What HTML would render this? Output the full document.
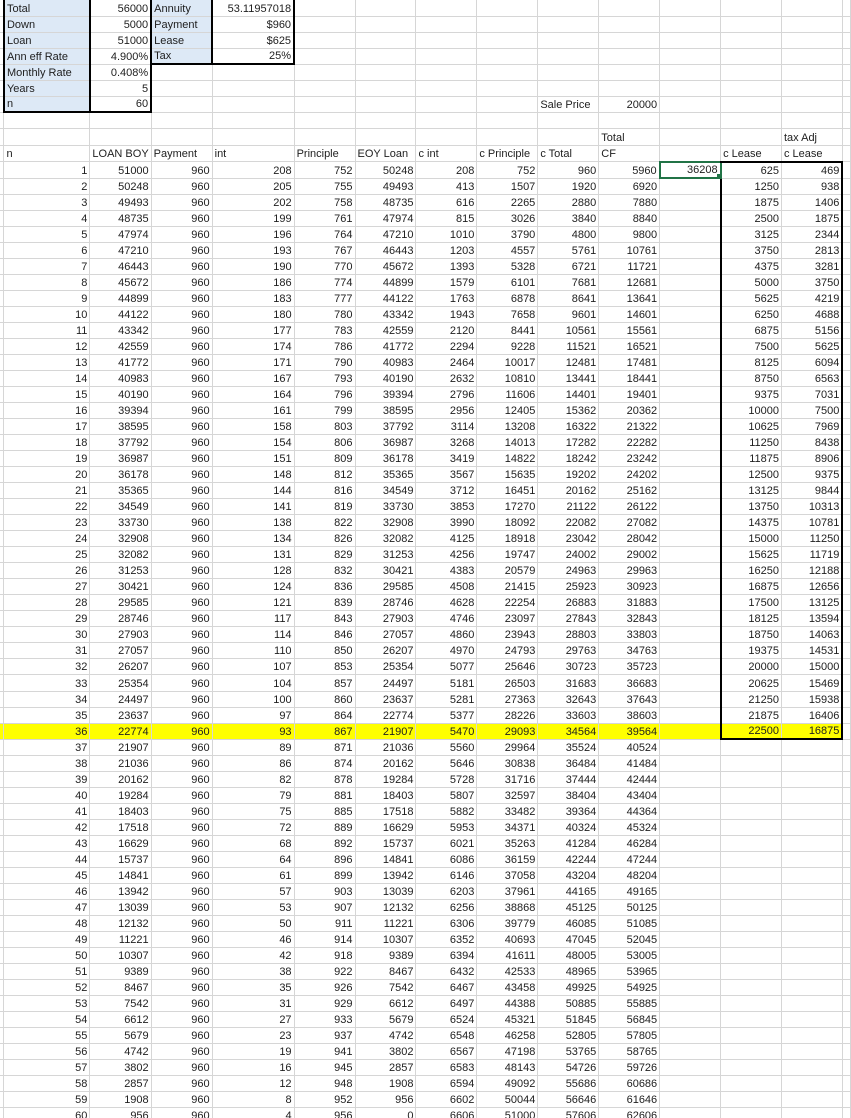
<!DOCTYPE html>
<html><head><meta charset="utf-8"><style>
html,body{margin:0;padding:0;background:#fff;width:851px;height:1118px;overflow:hidden}
table{border-collapse:collapse;table-layout:fixed;font-family:"Liberation Sans",sans-serif;font-size:11px;color:#1e1e1e}
td{border:1px solid #d6d6d6;padding:0 2px 0 2px;text-align:right;vertical-align:bottom;white-space:nowrap;overflow:hidden;line-height:13px;box-sizing:border-box}
td.l{text-align:left}
td.b{background:#dde9f6}
tr.t td{height:16px}
tr.t:first-child td{border-top:none}
tr.m td{height:16.67px}
tr.d td{height:16.04px}
tr.y td.yy{background:#ffff00}
td.z{border-left:none;border-right:1px solid #d6d6d6;padding:0}
</style></head><body>
<table>
<colgroup><col style="width:4px"><col style="width:86px"><col style="width:61px"><col style="width:61px"><col style="width:82px"><col style="width:61px"><col style="width:61px"><col style="width:61px"><col style="width:61px"><col style="width:61px"><col style="width:61px"><col style="width:61px"><col style="width:61px"><col style="width:61px"><col style="width:8px"></colgroup>
<tr class="t"><td class="z"></td><td class="l b" style="border-left:2px solid #000;border-right:2px solid #000">Total</td><td style="border-right:2px solid #000">56000</td><td class="l b">Annuity</td><td style="border-left:2px solid #000;border-right:2px solid #000">53.11957018</td><td></td><td></td><td></td><td></td><td></td><td></td><td></td><td></td><td></td><td></td></tr>
<tr class="t"><td class="z"></td><td class="l b" style="border-left:2px solid #000;border-right:2px solid #000">Down</td><td style="border-right:2px solid #000">5000</td><td class="l b">Payment</td><td style="border-left:2px solid #000;border-right:2px solid #000">$960</td><td></td><td></td><td></td><td></td><td></td><td></td><td></td><td></td><td></td><td></td></tr>
<tr class="t"><td class="z"></td><td class="l b" style="border-left:2px solid #000;border-right:2px solid #000">Loan</td><td style="border-right:2px solid #000">51000</td><td class="l b">Lease</td><td style="border-left:2px solid #000;border-right:2px solid #000">$625</td><td></td><td></td><td></td><td></td><td></td><td></td><td></td><td></td><td></td><td></td></tr>
<tr class="t"><td class="z"></td><td class="l b" style="border-left:2px solid #000;border-right:2px solid #000">Ann eff Rate</td><td style="border-right:2px solid #000">4.900%</td><td class="l b" style="border-bottom:2px solid #000">Tax</td><td style="border-left:2px solid #000;border-right:2px solid #000;border-bottom:2px solid #000">25%</td><td></td><td></td><td></td><td></td><td></td><td></td><td></td><td></td><td></td><td></td></tr>
<tr class="t"><td class="z"></td><td class="l b" style="border-left:2px solid #000;border-right:2px solid #000">Monthly Rate</td><td style="border-right:2px solid #000">0.408%</td><td></td><td></td><td></td><td></td><td></td><td></td><td></td><td></td><td></td><td></td><td></td><td></td></tr>
<tr class="t"><td class="z"></td><td class="l b" style="border-left:2px solid #000;border-right:2px solid #000">Years</td><td style="border-right:2px solid #000">5</td><td></td><td></td><td></td><td></td><td></td><td></td><td></td><td></td><td></td><td></td><td></td><td></td></tr>
<tr class="t"><td class="z"></td><td class="l b" style="border-left:2px solid #000;border-right:2px solid #000;border-bottom:2px solid #000">n</td><td style="border-right:2px solid #000;border-bottom:2px solid #000">60</td><td></td><td></td><td></td><td></td><td></td><td></td><td class="l">Sale Price</td><td>20000</td><td></td><td></td><td></td><td></td></tr>
<tr class="m"><td class="z"></td><td></td><td></td><td></td><td></td><td></td><td></td><td></td><td></td><td></td><td></td><td></td><td></td><td></td><td></td></tr>
<tr class="m"><td class="z"></td><td></td><td></td><td></td><td></td><td></td><td></td><td></td><td></td><td></td><td class="l">Total</td><td></td><td></td><td class="l">tax Adj</td><td></td></tr>
<tr class="m"><td class="z"></td><td class="l">n</td><td class="l">LOAN BOY</td><td class="l">Payment</td><td class="l">int</td><td class="l">Principle</td><td class="l">EOY Loan</td><td class="l">c int</td><td class="l">c Principle</td><td class="l">c Total</td><td class="l">CF</td><td></td><td class="l" style="border-bottom:2px solid #000">c Lease</td><td class="l" style="border-bottom:2px solid #000">c Lease</td><td></td></tr>
<tr class="d"><td class="z"></td><td>1</td><td>51000</td><td>960</td><td>208</td><td>752</td><td>50248</td><td>208</td><td>752</td><td>960</td><td>5960</td><td style="border:2px solid #217346;position:relative">36208<span style="position:absolute;right:-4px;bottom:-4px;width:6px;height:6px;background:#217346;border:1px solid #fff"></span></td><td style="border-left:2px solid #000">625</td><td style="border-right:2px solid #000">469</td><td></td></tr>
<tr class="d"><td class="z"></td><td>2</td><td>50248</td><td>960</td><td>205</td><td>755</td><td>49493</td><td>413</td><td>1507</td><td>1920</td><td>6920</td><td></td><td style="border-left:2px solid #000">1250</td><td style="border-right:2px solid #000">938</td><td></td></tr>
<tr class="d"><td class="z"></td><td>3</td><td>49493</td><td>960</td><td>202</td><td>758</td><td>48735</td><td>616</td><td>2265</td><td>2880</td><td>7880</td><td></td><td style="border-left:2px solid #000">1875</td><td style="border-right:2px solid #000">1406</td><td></td></tr>
<tr class="d"><td class="z"></td><td>4</td><td>48735</td><td>960</td><td>199</td><td>761</td><td>47974</td><td>815</td><td>3026</td><td>3840</td><td>8840</td><td></td><td style="border-left:2px solid #000">2500</td><td style="border-right:2px solid #000">1875</td><td></td></tr>
<tr class="d"><td class="z"></td><td>5</td><td>47974</td><td>960</td><td>196</td><td>764</td><td>47210</td><td>1010</td><td>3790</td><td>4800</td><td>9800</td><td></td><td style="border-left:2px solid #000">3125</td><td style="border-right:2px solid #000">2344</td><td></td></tr>
<tr class="d"><td class="z"></td><td>6</td><td>47210</td><td>960</td><td>193</td><td>767</td><td>46443</td><td>1203</td><td>4557</td><td>5761</td><td>10761</td><td></td><td style="border-left:2px solid #000">3750</td><td style="border-right:2px solid #000">2813</td><td></td></tr>
<tr class="d"><td class="z"></td><td>7</td><td>46443</td><td>960</td><td>190</td><td>770</td><td>45672</td><td>1393</td><td>5328</td><td>6721</td><td>11721</td><td></td><td style="border-left:2px solid #000">4375</td><td style="border-right:2px solid #000">3281</td><td></td></tr>
<tr class="d"><td class="z"></td><td>8</td><td>45672</td><td>960</td><td>186</td><td>774</td><td>44899</td><td>1579</td><td>6101</td><td>7681</td><td>12681</td><td></td><td style="border-left:2px solid #000">5000</td><td style="border-right:2px solid #000">3750</td><td></td></tr>
<tr class="d"><td class="z"></td><td>9</td><td>44899</td><td>960</td><td>183</td><td>777</td><td>44122</td><td>1763</td><td>6878</td><td>8641</td><td>13641</td><td></td><td style="border-left:2px solid #000">5625</td><td style="border-right:2px solid #000">4219</td><td></td></tr>
<tr class="d"><td class="z"></td><td>10</td><td>44122</td><td>960</td><td>180</td><td>780</td><td>43342</td><td>1943</td><td>7658</td><td>9601</td><td>14601</td><td></td><td style="border-left:2px solid #000">6250</td><td style="border-right:2px solid #000">4688</td><td></td></tr>
<tr class="d"><td class="z"></td><td>11</td><td>43342</td><td>960</td><td>177</td><td>783</td><td>42559</td><td>2120</td><td>8441</td><td>10561</td><td>15561</td><td></td><td style="border-left:2px solid #000">6875</td><td style="border-right:2px solid #000">5156</td><td></td></tr>
<tr class="d"><td class="z"></td><td>12</td><td>42559</td><td>960</td><td>174</td><td>786</td><td>41772</td><td>2294</td><td>9228</td><td>11521</td><td>16521</td><td></td><td style="border-left:2px solid #000">7500</td><td style="border-right:2px solid #000">5625</td><td></td></tr>
<tr class="d"><td class="z"></td><td>13</td><td>41772</td><td>960</td><td>171</td><td>790</td><td>40983</td><td>2464</td><td>10017</td><td>12481</td><td>17481</td><td></td><td style="border-left:2px solid #000">8125</td><td style="border-right:2px solid #000">6094</td><td></td></tr>
<tr class="d"><td class="z"></td><td>14</td><td>40983</td><td>960</td><td>167</td><td>793</td><td>40190</td><td>2632</td><td>10810</td><td>13441</td><td>18441</td><td></td><td style="border-left:2px solid #000">8750</td><td style="border-right:2px solid #000">6563</td><td></td></tr>
<tr class="d"><td class="z"></td><td>15</td><td>40190</td><td>960</td><td>164</td><td>796</td><td>39394</td><td>2796</td><td>11606</td><td>14401</td><td>19401</td><td></td><td style="border-left:2px solid #000">9375</td><td style="border-right:2px solid #000">7031</td><td></td></tr>
<tr class="d"><td class="z"></td><td>16</td><td>39394</td><td>960</td><td>161</td><td>799</td><td>38595</td><td>2956</td><td>12405</td><td>15362</td><td>20362</td><td></td><td style="border-left:2px solid #000">10000</td><td style="border-right:2px solid #000">7500</td><td></td></tr>
<tr class="d"><td class="z"></td><td>17</td><td>38595</td><td>960</td><td>158</td><td>803</td><td>37792</td><td>3114</td><td>13208</td><td>16322</td><td>21322</td><td></td><td style="border-left:2px solid #000">10625</td><td style="border-right:2px solid #000">7969</td><td></td></tr>
<tr class="d"><td class="z"></td><td>18</td><td>37792</td><td>960</td><td>154</td><td>806</td><td>36987</td><td>3268</td><td>14013</td><td>17282</td><td>22282</td><td></td><td style="border-left:2px solid #000">11250</td><td style="border-right:2px solid #000">8438</td><td></td></tr>
<tr class="d"><td class="z"></td><td>19</td><td>36987</td><td>960</td><td>151</td><td>809</td><td>36178</td><td>3419</td><td>14822</td><td>18242</td><td>23242</td><td></td><td style="border-left:2px solid #000">11875</td><td style="border-right:2px solid #000">8906</td><td></td></tr>
<tr class="d"><td class="z"></td><td>20</td><td>36178</td><td>960</td><td>148</td><td>812</td><td>35365</td><td>3567</td><td>15635</td><td>19202</td><td>24202</td><td></td><td style="border-left:2px solid #000">12500</td><td style="border-right:2px solid #000">9375</td><td></td></tr>
<tr class="d"><td class="z"></td><td>21</td><td>35365</td><td>960</td><td>144</td><td>816</td><td>34549</td><td>3712</td><td>16451</td><td>20162</td><td>25162</td><td></td><td style="border-left:2px solid #000">13125</td><td style="border-right:2px solid #000">9844</td><td></td></tr>
<tr class="d"><td class="z"></td><td>22</td><td>34549</td><td>960</td><td>141</td><td>819</td><td>33730</td><td>3853</td><td>17270</td><td>21122</td><td>26122</td><td></td><td style="border-left:2px solid #000">13750</td><td style="border-right:2px solid #000">10313</td><td></td></tr>
<tr class="d"><td class="z"></td><td>23</td><td>33730</td><td>960</td><td>138</td><td>822</td><td>32908</td><td>3990</td><td>18092</td><td>22082</td><td>27082</td><td></td><td style="border-left:2px solid #000">14375</td><td style="border-right:2px solid #000">10781</td><td></td></tr>
<tr class="d"><td class="z"></td><td>24</td><td>32908</td><td>960</td><td>134</td><td>826</td><td>32082</td><td>4125</td><td>18918</td><td>23042</td><td>28042</td><td></td><td style="border-left:2px solid #000">15000</td><td style="border-right:2px solid #000">11250</td><td></td></tr>
<tr class="d"><td class="z"></td><td>25</td><td>32082</td><td>960</td><td>131</td><td>829</td><td>31253</td><td>4256</td><td>19747</td><td>24002</td><td>29002</td><td></td><td style="border-left:2px solid #000">15625</td><td style="border-right:2px solid #000">11719</td><td></td></tr>
<tr class="d"><td class="z"></td><td>26</td><td>31253</td><td>960</td><td>128</td><td>832</td><td>30421</td><td>4383</td><td>20579</td><td>24963</td><td>29963</td><td></td><td style="border-left:2px solid #000">16250</td><td style="border-right:2px solid #000">12188</td><td></td></tr>
<tr class="d"><td class="z"></td><td>27</td><td>30421</td><td>960</td><td>124</td><td>836</td><td>29585</td><td>4508</td><td>21415</td><td>25923</td><td>30923</td><td></td><td style="border-left:2px solid #000">16875</td><td style="border-right:2px solid #000">12656</td><td></td></tr>
<tr class="d"><td class="z"></td><td>28</td><td>29585</td><td>960</td><td>121</td><td>839</td><td>28746</td><td>4628</td><td>22254</td><td>26883</td><td>31883</td><td></td><td style="border-left:2px solid #000">17500</td><td style="border-right:2px solid #000">13125</td><td></td></tr>
<tr class="d"><td class="z"></td><td>29</td><td>28746</td><td>960</td><td>117</td><td>843</td><td>27903</td><td>4746</td><td>23097</td><td>27843</td><td>32843</td><td></td><td style="border-left:2px solid #000">18125</td><td style="border-right:2px solid #000">13594</td><td></td></tr>
<tr class="d"><td class="z"></td><td>30</td><td>27903</td><td>960</td><td>114</td><td>846</td><td>27057</td><td>4860</td><td>23943</td><td>28803</td><td>33803</td><td></td><td style="border-left:2px solid #000">18750</td><td style="border-right:2px solid #000">14063</td><td></td></tr>
<tr class="d"><td class="z"></td><td>31</td><td>27057</td><td>960</td><td>110</td><td>850</td><td>26207</td><td>4970</td><td>24793</td><td>29763</td><td>34763</td><td></td><td style="border-left:2px solid #000">19375</td><td style="border-right:2px solid #000">14531</td><td></td></tr>
<tr class="d"><td class="z"></td><td>32</td><td>26207</td><td>960</td><td>107</td><td>853</td><td>25354</td><td>5077</td><td>25646</td><td>30723</td><td>35723</td><td></td><td style="border-left:2px solid #000">20000</td><td style="border-right:2px solid #000">15000</td><td></td></tr>
<tr class="d"><td class="z"></td><td>33</td><td>25354</td><td>960</td><td>104</td><td>857</td><td>24497</td><td>5181</td><td>26503</td><td>31683</td><td>36683</td><td></td><td style="border-left:2px solid #000">20625</td><td style="border-right:2px solid #000">15469</td><td></td></tr>
<tr class="d"><td class="z"></td><td>34</td><td>24497</td><td>960</td><td>100</td><td>860</td><td>23637</td><td>5281</td><td>27363</td><td>32643</td><td>37643</td><td></td><td style="border-left:2px solid #000">21250</td><td style="border-right:2px solid #000">15938</td><td></td></tr>
<tr class="d"><td class="z"></td><td>35</td><td>23637</td><td>960</td><td>97</td><td>864</td><td>22774</td><td>5377</td><td>28226</td><td>33603</td><td>38603</td><td></td><td style="border-left:2px solid #000">21875</td><td style="border-right:2px solid #000">16406</td><td></td></tr>
<tr class="d y"><td class="z yy"></td><td class="yy">36</td><td class="yy">22774</td><td class="yy">960</td><td class="yy">93</td><td class="yy">867</td><td class="yy">21907</td><td class="yy">5470</td><td class="yy">29093</td><td class="yy">34564</td><td class="yy">39564</td><td class="yy"></td><td class="yy" style="border-left:2px solid #000;border-bottom:2px solid #000">22500</td><td class="yy" style="border-right:2px solid #000;border-bottom:2px solid #000">16875</td><td></td></tr>
<tr class="d"><td class="z"></td><td>37</td><td>21907</td><td>960</td><td>89</td><td>871</td><td>21036</td><td>5560</td><td>29964</td><td>35524</td><td>40524</td><td></td><td></td><td></td><td></td></tr>
<tr class="d"><td class="z"></td><td>38</td><td>21036</td><td>960</td><td>86</td><td>874</td><td>20162</td><td>5646</td><td>30838</td><td>36484</td><td>41484</td><td></td><td></td><td></td><td></td></tr>
<tr class="d"><td class="z"></td><td>39</td><td>20162</td><td>960</td><td>82</td><td>878</td><td>19284</td><td>5728</td><td>31716</td><td>37444</td><td>42444</td><td></td><td></td><td></td><td></td></tr>
<tr class="d"><td class="z"></td><td>40</td><td>19284</td><td>960</td><td>79</td><td>881</td><td>18403</td><td>5807</td><td>32597</td><td>38404</td><td>43404</td><td></td><td></td><td></td><td></td></tr>
<tr class="d"><td class="z"></td><td>41</td><td>18403</td><td>960</td><td>75</td><td>885</td><td>17518</td><td>5882</td><td>33482</td><td>39364</td><td>44364</td><td></td><td></td><td></td><td></td></tr>
<tr class="d"><td class="z"></td><td>42</td><td>17518</td><td>960</td><td>72</td><td>889</td><td>16629</td><td>5953</td><td>34371</td><td>40324</td><td>45324</td><td></td><td></td><td></td><td></td></tr>
<tr class="d"><td class="z"></td><td>43</td><td>16629</td><td>960</td><td>68</td><td>892</td><td>15737</td><td>6021</td><td>35263</td><td>41284</td><td>46284</td><td></td><td></td><td></td><td></td></tr>
<tr class="d"><td class="z"></td><td>44</td><td>15737</td><td>960</td><td>64</td><td>896</td><td>14841</td><td>6086</td><td>36159</td><td>42244</td><td>47244</td><td></td><td></td><td></td><td></td></tr>
<tr class="d"><td class="z"></td><td>45</td><td>14841</td><td>960</td><td>61</td><td>899</td><td>13942</td><td>6146</td><td>37058</td><td>43204</td><td>48204</td><td></td><td></td><td></td><td></td></tr>
<tr class="d"><td class="z"></td><td>46</td><td>13942</td><td>960</td><td>57</td><td>903</td><td>13039</td><td>6203</td><td>37961</td><td>44165</td><td>49165</td><td></td><td></td><td></td><td></td></tr>
<tr class="d"><td class="z"></td><td>47</td><td>13039</td><td>960</td><td>53</td><td>907</td><td>12132</td><td>6256</td><td>38868</td><td>45125</td><td>50125</td><td></td><td></td><td></td><td></td></tr>
<tr class="d"><td class="z"></td><td>48</td><td>12132</td><td>960</td><td>50</td><td>911</td><td>11221</td><td>6306</td><td>39779</td><td>46085</td><td>51085</td><td></td><td></td><td></td><td></td></tr>
<tr class="d"><td class="z"></td><td>49</td><td>11221</td><td>960</td><td>46</td><td>914</td><td>10307</td><td>6352</td><td>40693</td><td>47045</td><td>52045</td><td></td><td></td><td></td><td></td></tr>
<tr class="d"><td class="z"></td><td>50</td><td>10307</td><td>960</td><td>42</td><td>918</td><td>9389</td><td>6394</td><td>41611</td><td>48005</td><td>53005</td><td></td><td></td><td></td><td></td></tr>
<tr class="d"><td class="z"></td><td>51</td><td>9389</td><td>960</td><td>38</td><td>922</td><td>8467</td><td>6432</td><td>42533</td><td>48965</td><td>53965</td><td></td><td></td><td></td><td></td></tr>
<tr class="d"><td class="z"></td><td>52</td><td>8467</td><td>960</td><td>35</td><td>926</td><td>7542</td><td>6467</td><td>43458</td><td>49925</td><td>54925</td><td></td><td></td><td></td><td></td></tr>
<tr class="d"><td class="z"></td><td>53</td><td>7542</td><td>960</td><td>31</td><td>929</td><td>6612</td><td>6497</td><td>44388</td><td>50885</td><td>55885</td><td></td><td></td><td></td><td></td></tr>
<tr class="d"><td class="z"></td><td>54</td><td>6612</td><td>960</td><td>27</td><td>933</td><td>5679</td><td>6524</td><td>45321</td><td>51845</td><td>56845</td><td></td><td></td><td></td><td></td></tr>
<tr class="d"><td class="z"></td><td>55</td><td>5679</td><td>960</td><td>23</td><td>937</td><td>4742</td><td>6548</td><td>46258</td><td>52805</td><td>57805</td><td></td><td></td><td></td><td></td></tr>
<tr class="d"><td class="z"></td><td>56</td><td>4742</td><td>960</td><td>19</td><td>941</td><td>3802</td><td>6567</td><td>47198</td><td>53765</td><td>58765</td><td></td><td></td><td></td><td></td></tr>
<tr class="d"><td class="z"></td><td>57</td><td>3802</td><td>960</td><td>16</td><td>945</td><td>2857</td><td>6583</td><td>48143</td><td>54726</td><td>59726</td><td></td><td></td><td></td><td></td></tr>
<tr class="d"><td class="z"></td><td>58</td><td>2857</td><td>960</td><td>12</td><td>948</td><td>1908</td><td>6594</td><td>49092</td><td>55686</td><td>60686</td><td></td><td></td><td></td><td></td></tr>
<tr class="d"><td class="z"></td><td>59</td><td>1908</td><td>960</td><td>8</td><td>952</td><td>956</td><td>6602</td><td>50044</td><td>56646</td><td>61646</td><td></td><td></td><td></td><td></td></tr>
<tr class="d"><td class="z"></td><td>60</td><td>956</td><td>960</td><td>4</td><td>956</td><td>0</td><td>6606</td><td>51000</td><td>57606</td><td>62606</td><td></td><td></td><td></td><td></td></tr>
</table>
</body></html>
